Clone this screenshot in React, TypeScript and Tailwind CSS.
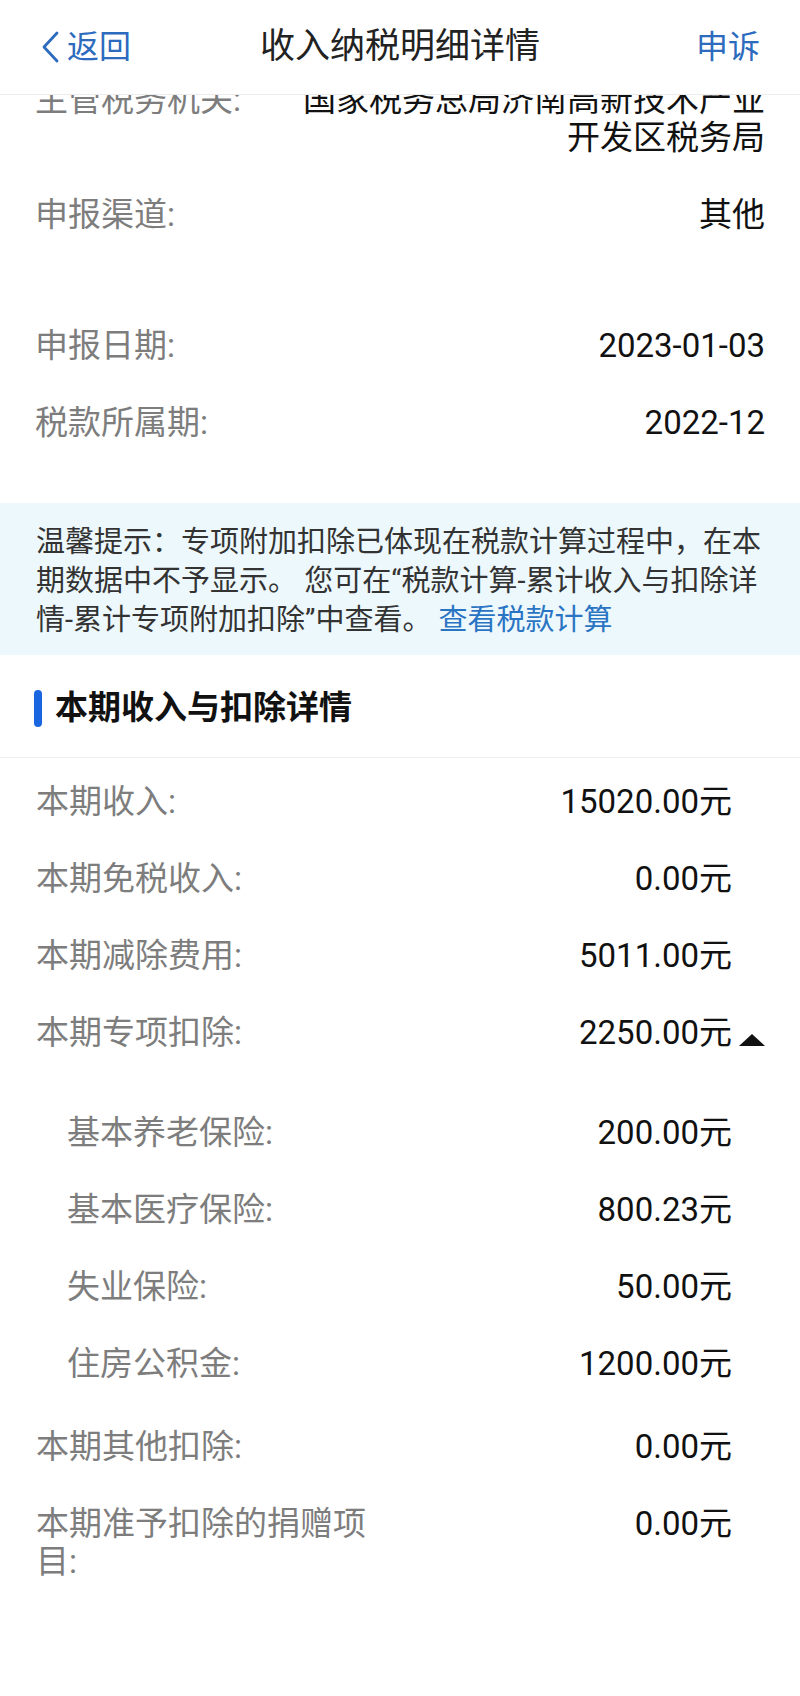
import { ReactNode } from 'react';

const font = "font-['Roboto','Noto_Sans_CJK_SC',sans-serif]";

const deductions = [
  { label: '本期收入:', value: '15020.00元' },
  { label: '本期免税收入:', value: '0.00元' },
  { label: '本期减除费用:', value: '5011.00元' },
  { label: '本期专项扣除:', value: '2250.00元', expanded: true },
];

const subItems = [
  { label: '基本养老保险:', value: '200.00元' },
  { label: '基本医疗保险:', value: '800.23元' },
  { label: '失业保险:', value: '50.00元' },
  { label: '住房公积金:', value: '1200.00元' },
];

const others = [
  { label: '本期其他扣除:', value: '0.00元' },
  { label: '本期准予扣除的捐赠项目:', value: '0.00元' },
];

function InfoRow({ label, children }: { label: string; children: ReactNode }) {
  return (
    <div className="flex items-start justify-between px-[35px] py-[19.5px] text-[33px] leading-[38px]">
      <span className="shrink-0 text-[#7d7d7d]">{label}</span>
      <span className="text-right text-[#111]">{children}</span>
    </div>
  );
}

function AmountRow({
  label,
  value,
  indent,
  expanded,
}: {
  label: string;
  value: string;
  indent?: boolean;
  expanded?: boolean;
}) {
  return (
    <div className="flex items-start py-[19.5px] pl-[36px] pr-[35px] text-[33px] leading-[38px]">
      <span className={`max-w-[340px] text-[#7d7d7d] ${indent ? 'pl-[31px]' : ''}`}>{label}</span>
      <span className="ml-auto whitespace-nowrap text-[#111]">{value}</span>
      <span className="flex h-[38px] w-[33px] items-center justify-end">
        {expanded && (
          <svg width="26" height="12" viewBox="0 0 26 12" className="mt-[14px]">
            <polygon points="13,0 26,12 0,12" fill="#111" />
          </svg>
        )}
      </span>
    </div>
  );
}

export default function App() {
  return (
    <div className={`min-h-[1696px] w-[800px] overflow-hidden bg-white ${font}`}>
      <header className="relative z-10 grid h-[95px] grid-cols-[1fr_auto_1fr] items-center border-b border-[#ececec] bg-white px-[40px]">
        <div className="flex items-center gap-[7px] text-[32px] text-[#2c6bbd]">
          <svg width="20" height="32" viewBox="0 0 20 32" fill="none">
            <polyline points="17,2 4,16 17,30" stroke="#2c6bbd" strokeWidth="2.8" strokeLinecap="round" strokeLinejoin="round" />
          </svg>
          <span>返回</span>
        </div>
        <h1 className="text-[35px] font-normal text-[#222]">收入纳税明细详情</h1>
        <div className="text-right text-[32px] text-[#2c6bbd]">申诉</div>
      </header>

      <main className="-mt-[33.5px]">
        <InfoRow label="主管税务机关:">
          国家税务总局济南高新技术产业
          <br />
          开发区税务局
        </InfoRow>
        <InfoRow label="申报渠道:">其他</InfoRow>
        <div className="h-[54px]" />
        <InfoRow label="申报日期:">2023-01-03</InfoRow>
        <InfoRow label="税款所属期:">2022-12</InfoRow>

        <div className="mt-[41.5px] bg-[#edf8fc] px-[36px] pb-[15px] pt-[20px] text-[29px] leading-[39px] text-[#333]">
          <p className="whitespace-nowrap">温馨提示：专项附加扣除已体现在税款计算过程中，在本</p>
          <p className="whitespace-nowrap">期数据中不予显示。 您可在“税款计算-累计收入与扣除详</p>
          <p className="whitespace-nowrap">
            情-累计专项附加扣除”中查看。 <span className="text-[#2a74c4]">查看税款计算</span>
          </p>
        </div>

        <div className="mt-[33px] flex items-center border-b border-[#eeeeee] pb-[29px] pl-[34px]">
          <span className="h-[37px] w-[8px] rounded-full bg-[#1a66e0]" />
          <h2 className="ml-[13px] text-[33px] font-bold leading-[40px] text-[#111]">本期收入与扣除详情</h2>
        </div>

        <div className="pt-[5.5px]">
          {deductions.map((row) => (
            <AmountRow key={row.label} label={row.label} value={row.value} expanded={row.expanded} />
          ))}
          <div className="pb-[6px] pt-[23px]">
            {subItems.map((row) => (
              <AmountRow key={row.label} label={row.label} value={row.value} indent />
            ))}
          </div>
          {others.map((row) => (
            <AmountRow key={row.label} label={row.label} value={row.value} />
          ))}
        </div>
      </main>
    </div>
  );
}
